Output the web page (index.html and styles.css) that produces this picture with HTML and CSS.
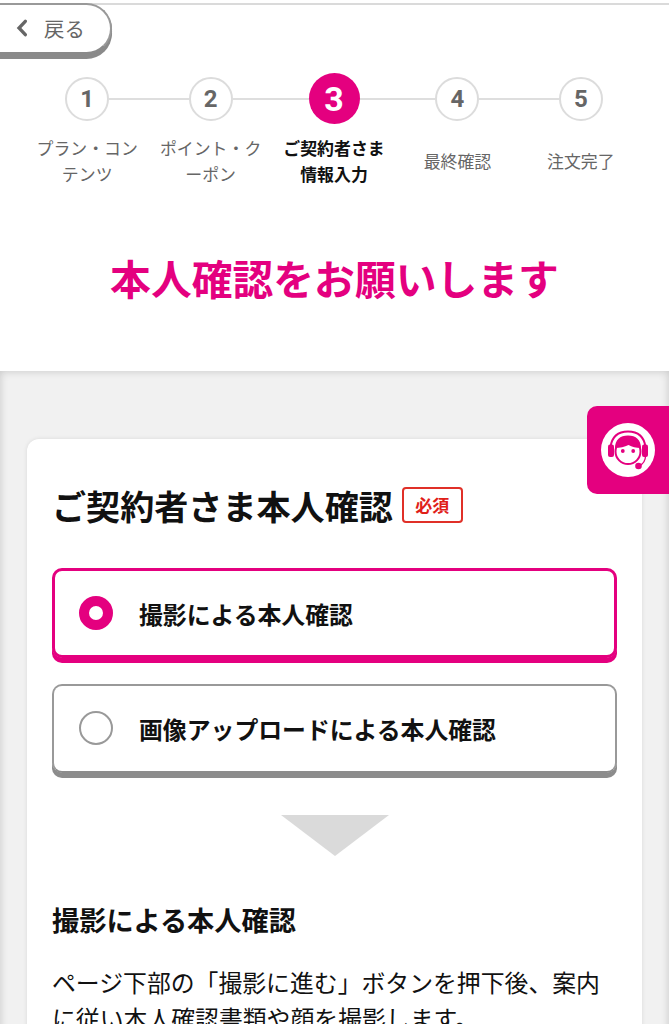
FILE: index.html
```html
<!DOCTYPE html>
<html lang="ja">
<head>
<meta charset="utf-8">
<title>本人確認</title>
<link rel="stylesheet" href="styles.css">
</head>
<body>
<div class="page">
  <header class="header">
    <a class="back">
      <svg class="back-icon" width="12" height="18" viewBox="0 0 12 18"><path d="M9.300 2.300 3 9l6.300 6.700" fill="none" stroke="#666" stroke-width="3.300" stroke-linecap="round"/></svg>
      <span>戻る</span>
    </a>
  </header>
  <ol class="steps">
    <li class="step"><div class="rail"><span class="dot">1</span></div><p class="label">プラン・コン<br>テンツ</p></li>
    <li class="step"><div class="rail"><span class="dot">2</span></div><p class="label">ポイント・ク<br>ーポン</p></li>
    <li class="step current"><div class="rail"><span class="dot">3</span></div><p class="label">ご契約者さま<br>情報入力</p></li>
    <li class="step"><div class="rail"><span class="dot">4</span></div><p class="label">最終確認</p></li>
    <li class="step"><div class="rail"><span class="dot">5</span></div><p class="label">注文完了</p></li>
  </ol>
  <h1 class="title">本人確認をお願いします</h1>
  <main class="band">
    <section class="card">
      <div class="card-head">
        <h2 class="card-title">ご契約者さま本人確認</h2>
        <span class="required">必須</span>
      </div>
      <div class="options">
        <div class="option selected"><span class="radio"></span><span>撮影による本人確認</span></div>
        <div class="option"><span class="radio"></span><span>画像アップロードによる本人確認</span></div>
      </div>
      <svg class="arrow" width="108" height="41" viewBox="0 0 108 41"><path d="M0 0h108L54 41z" fill="#dadada"/></svg>
      <h3 class="subhead">撮影による本人確認</h3>
      <p class="body-text">ページ下部の「撮影に進む」ボタンを押下後、案内<br>に従い本人確認書類や顔を撮影します。</p>
    </section>
  </main>
  <div class="support">
    <svg width="54" height="54" viewBox="0 0 54 54">
      <circle cx="27" cy="27" r="27" fill="#fff"/>
      <path d="M9.500 24C11 13.500 17 8.500 27 8.500S43 13.500 44.500 24" fill="none" stroke="#e4007f" stroke-width="2"/>
      <circle cx="27" cy="28.500" r="12.500" fill="#fff" stroke="#e4007f" stroke-width="2"/>
      <path d="M14 25C14 17 19 12.500 27 12.500S40 17 40 25C35 25 31 24 27.500 22C23.500 24 19 25 14 25z" fill="#e4007f"/>
      <rect x="7" y="21.500" width="6" height="12.500" rx="2" fill="#e4007f"/>
      <rect x="41" y="21.500" width="6" height="12.500" rx="2" fill="#e4007f"/>
      <circle cx="21.800" cy="28" r="1.900" fill="#e4007f"/>
      <circle cx="32.200" cy="28" r="1.900" fill="#e4007f"/>
      <path d="M44.500 33C44.500 38 42 41 38 43" fill="none" stroke="#e4007f" stroke-width="1.300"/>
      <circle cx="37.500" cy="43" r="3.300" fill="#e4007f"/>
    </svg>
  </div>
</div>
</body>
</html>
```
FILE: styles.css
```css
* { box-sizing: border-box; margin: 0; padding: 0; }
body {
  background: #fff;
  color: #111;
  font-family: "Noto Sans CJK JP", sans-serif;
  overflow: hidden;
}
.page {
  position: relative;
  width: 669px;
  height: 1024px;
  overflow: hidden;
  display: flex;
  flex-direction: column;
}
.header {
  flex: none;
  height: 59px;
  padding-top: 3px;
  background: linear-gradient(#dadada, #dadada) 0 3px / 100% 2px no-repeat;
}
.back {
  display: flex;
  align-items: center;
  gap: 16px;
  width: 112px;
  height: 51px;
  padding: 0 0 2px 16px;
  background: #fff;
  border: 2px solid #999;
  border-left: 0;
  border-bottom-color: #8a8a8a;
  border-radius: 0 26px 26px 0;
  box-shadow: 0 1px 0 #8a8a8a, 0 3px 0 #8a8a8a, 0 5px 0 #8a8a8a;
  color: #666;
  font-size: 20.400px;
}
.steps {
  flex: none;
  display: flex;
  width: 617px;
  margin: 14px 0 0 25.500px;
  list-style: none;
}
.step { flex: 1; }
.rail {
  display: flex;
  align-items: center;
  height: 51px;
}
.rail::before, .rail::after {
  content: "";
  flex: 1;
  height: 2px;
  background: #dedede;
}
.step:first-child .rail::before, .step:last-child .rail::after { background: none; }
.dot {
  display: flex;
  align-items: center;
  justify-content: center;
  width: 44px;
  height: 44px;
  border: 2px solid #dcdcdc;
  border-radius: 50%;
  color: #666;
  font: 700 24px Roboto, sans-serif;
}
.label {
  display: flex;
  align-items: center;
  justify-content: center;
  height: 51px;
  margin-top: 11px;
  color: #666;
  font-size: 16.900px;
  line-height: 25.500px;
  text-align: center;
  white-space: nowrap;
}
.current .dot {
  width: 51px;
  height: 51px;
  border: 0;
  background: #e4007f;
  color: #fff;
  font-size: 34px;
}
.current .label { color: #111; font-weight: 700; }
.title {
  flex: none;
  height: 185px;
  padding-top: 62px;
  color: #e4007f;
  font-size: 40.800px;
  line-height: 60px;
  text-align: center;
}
.band {
  flex: 1;
  padding: 68px 27px 0;
  background: #f1f1f1;
  box-shadow: inset 0 0 9px rgba(0, 0, 0, .18);
}
.card {
  height: 640px;
  padding: 40px 25px 0;
  background: #fff;
  border-radius: 12px;
  box-shadow: 0 0 4px rgba(0, 0, 0, .1);
}
.card-head { display: flex; align-items: center; gap: 9px; height: 52px; }
.card-title { font-size: 34.100px; line-height: 52px; }
.required {
  width: 61px;
  height: 36px;
  border: 2px solid #e03028;
  border-radius: 4px;
  color: #e02018;
  font-size: 17px;
  font-weight: 700;
  line-height: 32px;
  text-align: center;
}
.options { display: grid; gap: 26px; margin-top: 37px; }
.option {
  display: flex;
  align-items: center;
  gap: 26px;
  height: 89px;
  padding: 0 0 1px 25px;
  border: 2px solid #999;
  border-bottom-color: #8c8c8c;
  border-radius: 10px;
  box-shadow: 0 1px 0 #8c8c8c, 0 3px 0 #8c8c8c, 0 5px 0 #8c8c8c;
  font-size: 23.850px;
  font-weight: 700;
}
.radio { width: 34px; height: 34px; border: 2px solid #999; border-radius: 50%; }
.selected {
  height: 90px;
  padding: 0 0 0 24px;
  border: 3px solid #e4007f;
  box-shadow: 0 1px 0 #e4007f, 0 3px 0 #e4007f, 0 5px 0 #e4007f;
}
.selected .radio { border: 10px solid #e4007f; }
.arrow { display: block; margin: 42px auto 0; }
.subhead { margin-top: 43px; font-size: 27.200px; line-height: 40px; }
.body-text { margin-top: 25px; font-size: 23.850px; line-height: 35.700px; white-space: nowrap; }
.support {
  position: absolute;
  top: 406px;
  right: 0;
  width: 82px;
  height: 88px;
  padding: 17px 0 0 14px;
  background: #e4007f;
  border-radius: 10px 0 0 10px;
}
```
